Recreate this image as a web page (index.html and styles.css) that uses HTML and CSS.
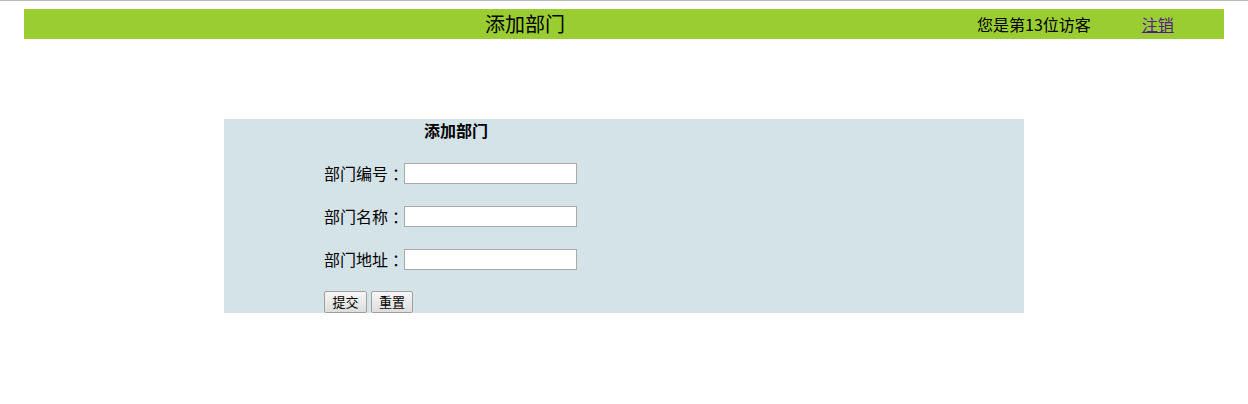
FILE: index.html
```html
<!DOCTYPE html>
<html lang="zh">
<head>
<meta charset="utf-8">
<title>添加部门</title>
<link rel="stylesheet" href="styles.css">
</head>
<body>
<div class="topline"></div>
<div class="header">
  <span class="title">添加部门</span>
  <span class="visitor">您是第13位访客</span>
  <a class="logout" href="#">注销</a>
</div>
<div class="panel">
  <div class="panel-title">添加部门</div>
  <form class="form">
    <div class="row"><label class="label">部门编号<span class="colon">：</span></label><input class="field" type="text"></div>
    <div class="row"><label class="label">部门名称<span class="colon">：</span></label><input class="field" type="text"></div>
    <div class="row"><label class="label">部门地址<span class="colon">：</span></label><input class="field" type="text"></div>
    <div class="buttons"><button class="btn" type="submit">提交</button><button class="btn" type="reset">重置</button></div>
  </form>
</div>
</body>
</html>
```

FILE: styles.css
```css
html, body {
  margin: 0;
  padding: 0;
  background: #fff;
  font-family: "Noto Sans CJK SC", "Liberation Sans", sans-serif;
  color: #000;
}
.topline {
  height: 1px;
  background: #bbbbbb;
}
.header {
  width: 1200px;
  height: 30px;
  margin: 8px auto 0;
  background: #9acd32;
  display: flex;
  align-items: center;
}
.title {
  font-size: 20px;
  line-height: 30px;
  margin-left: 461px;
}
.visitor {
  font-size: 16px;
  line-height: 30px;
  margin-left: 412px;
}
.logout {
  font-size: 16px;
  line-height: 30px;
  margin-left: 51px;
  color: #551a8b;
}
.panel {
  width: 800px;
  margin: 80px auto 0;
  background: #d4e3e7;
  height: 194px;
  overflow: hidden;
}
.panel-title {
  font-size: 16px;
  font-weight: bold;
  line-height: 22px;
  padding-left: 200px;
}
.form {
  margin: 0;
  padding: 22px 0 0 100px;
  display: flex;
  flex-direction: column;
  gap: 22px;
}
.row {
  display: flex;
  align-items: center;
  height: 21px;
}
.label {
  width: 80px;
  font-size: 16px;
  line-height: 21px;
  white-space: nowrap;
}
.colon {
  display: inline-block;
  margin-left: 4px;
}
.field {
  box-sizing: border-box;
  width: 173px;
  height: 21px;
  margin: 0;
  padding: 1px 2px;
  border: 1px solid #a9a9a9;
  background: #fff;
  font-size: 13px;
}
.buttons {
  display: flex;
  gap: 4px;
  margin-top: -1px;
}
.btn {
  box-sizing: border-box;
  height: 22px;
  padding: 0 5px;
  font-size: 13px;
  font-family: "Noto Sans CJK SC", sans-serif;
  border: 1px solid #a0a0a0;
  border-radius: 2px;
  background: linear-gradient(#f6f6f6, #dddddd);
  line-height: 18px;
}
.btn:first-child { width: 43px; }
.btn:last-child { width: 42px; }
```
